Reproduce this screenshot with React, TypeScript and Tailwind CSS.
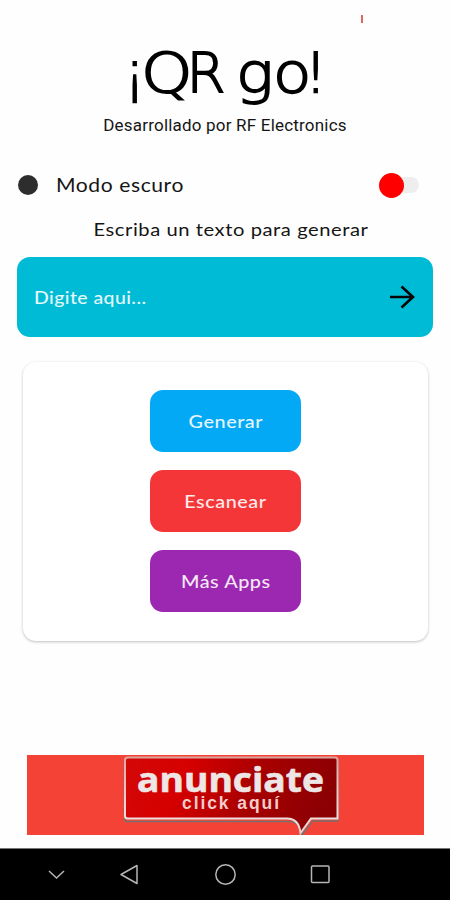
import type { ReactNode } from "react";

function ActionButton({ color, children }: { color: string; children: ReactNode }) {
	return (
		<button className={`flex h-[62px] w-[151px] items-center justify-center rounded-[13px] text-[18px] font-medium text-white/90 ${color}`}>
			<span className="inline-block scale-x-110 tracking-[0.5px]">{children}</span>
		</button>
	);
}

function Title() {
	return (
		<h1 className="flex h-[68px] items-baseline justify-center whitespace-pre font-['DejaVu_Sans'] text-[56px] font-extralight leading-[61px] text-black [-webkit-text-stroke:1.8px_black]">
			<span className="-ml-[5px] w-[17px]">¡</span>
			<span className="w-[46px] origin-left scale-x-[1.17]">Q</span>
			<span className="w-[49px]">R</span>
			<span className="w-[37px] origin-left scale-x-[1.12]">g</span>
			<span className="w-[32px] origin-left scale-x-[1.12]">o</span>
			<span className="w-[17px]">!</span>
		</h1>
	);
}

function AdBanner() {
	return (
		<div className="mx-auto h-[80px] w-[397px] bg-[#f44336]">
			<svg viewBox="0 0 397 80" className="block h-[80px] w-[397px]">
				<defs>
					<linearGradient id="adFill" x1="0" y1="0" x2="1" y2="0.15">
						<stop offset="0" stopColor="#d40808" />
						<stop offset="0.3" stopColor="#d60000" />
						<stop offset="0.65" stopColor="#a80000" />
						<stop offset="1" stopColor="#8c0004" />
					</linearGradient>
					<linearGradient id="adEdge" x1="0" y1="0" x2="0" y2="1">
						<stop offset="0" stopColor="#dba5a0" />
						<stop offset="0.8" stopColor="#ece0df" />
						<stop offset="1" stopColor="#d8d0cf" />
					</linearGradient>
				</defs>
				<path
					d="M100 5H308Q311 5 311 7V66H286L275 80C274 71 270 66.500 262 66.500H100Q97.500 66.500 97.500 64V7Q97.500 5 100 5Z"
					fill="none"
					stroke="#77706f"
					strokeWidth="1.500"
				/>
				<path
					d="M101 2.500H308Q310.500 2.500 310.500 5V63.500H284L273.500 78C272.500 69 268 63.500 260 63.500H101Q98 63.500 98 61V5Q98 2.500 101 2.500Z"
					fill="url(#adFill)"
					stroke="url(#adEdge)"
					strokeWidth="2"
				/>
				<text x="110" y="36.500" textLength="187" lengthAdjust="spacingAndGlyphs" fontFamily="Open Sans" fontSize="34.500" fontWeight="700" fill="#eee5e5" stroke="#eee5e5" strokeWidth="0.600">
					anunciate
				</text>
				<text x="155" y="54" textLength="97" fontFamily="Liberation Sans" fontSize="17.500" fontWeight="700" fill="#f3cccc">
					click aquí
				</text>
			</svg>
		</div>
	);
}

function NavBar() {
	return (
		<nav className="mt-[13px] h-[52px] border-t border-[#777] bg-black">
			<svg viewBox="0 0 450 51" className="block h-[51px] w-[450px]" fill="none" stroke="#b5b5b5" strokeWidth="1.500">
				<path d="M49 22L56.500 29L64 22" />
				<path d="M121 25.500L137 16.500V34.500Z" strokeLinejoin="round" />
				<circle cx="225.500" cy="25.500" r="9.700" />
				<rect x="311.500" y="17" width="17.500" height="16.500" rx="1" />
			</svg>
		</nav>
	);
}

export default function App() {
	return (
		<div className="flex h-[900px] w-[450px] flex-col overflow-hidden bg-[#fefefe] font-['Lato',sans-serif] text-[#151515]">
			<div className="flex h-[42px] justify-end pr-[87px] pt-[15px]">
				<div className="h-[8px] w-[2px] bg-[#d9695c]" />
			</div>
			<Title />
			<p className="mt-[3px] text-center font-[Roboto] text-[17px] leading-[24px] tracking-[0.2px]">
				Desarrollado por RF Electronics
			</p>
			<div className="mt-[36px] flex h-[24px] items-center pl-[18px] pr-[31px]">
				<div className="h-[20px] w-[20px] rounded-full bg-[#2d2d2d]" />
				<span className="ml-[18px] inline-block origin-left scale-x-[1.14] pt-[2px] text-[18.5px] tracking-[0.5px]">Modo escuro</span>
				<div className="ml-auto flex h-[16px] w-[40px] items-center rounded-full bg-[#eeeeee]">
					<div className="h-[25px] w-[25px] rounded-full bg-[#ff0000]" />
				</div>
			</div>
			<p className="ml-[12px] mt-[20px] scale-x-[1.12] text-center text-[18px] leading-[24px] tracking-[0.5px]">
				Escriba un texto para generar
			</p>
			<div className="ml-[17px] mt-[16px] flex h-[80px] w-[416px] items-center justify-between rounded-[13px] bg-[#00bbd5] pl-[17px] pr-[18px]">
				<span className="inline-block origin-left scale-x-[1.08] text-[18px] font-medium tracking-[0.4px] text-white/90">Digite aqui...</span>
				<svg viewBox="0 0 26 24" className="h-[24px] w-[26px]" fill="none" stroke="#050505" strokeWidth="2.600">
					<path d="M1 12H24M12.500 1.500L24 12L12.500 22.500" />
				</svg>
			</div>
			<div className="ml-[23px] mt-[25px] flex h-[279px] w-[405px] flex-col items-center gap-[18px] rounded-[13px] bg-white pt-[28px] shadow-[0_1px_3px_rgba(0,0,0,0.25)]">
				<ActionButton color="bg-[#03a9f4]">Generar</ActionButton>
				<ActionButton color="bg-[#f43639]">Escanear</ActionButton>
				<ActionButton color="bg-[#9c27b0]">Más Apps</ActionButton>
			</div>
			<div className="mt-auto">
				<AdBanner />
				<NavBar />
			</div>
		</div>
	);
}
